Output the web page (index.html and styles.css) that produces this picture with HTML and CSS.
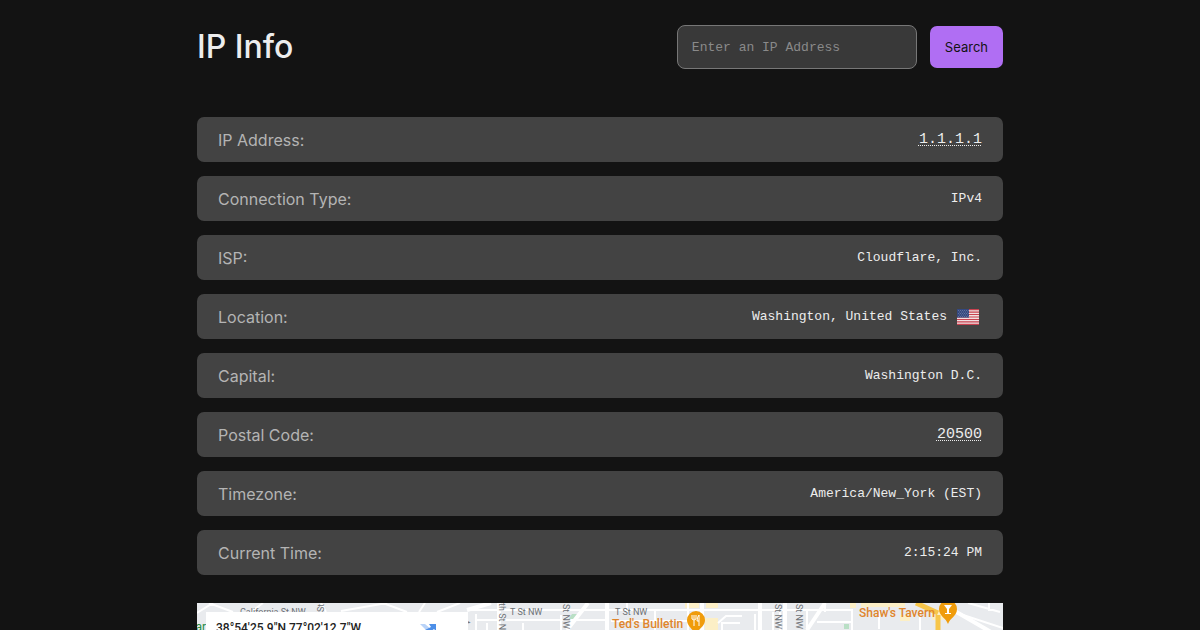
FILE: index.html
```html
<!DOCTYPE html>
<html lang="en">
<head>
<meta charset="utf-8">
<meta name="viewport" content="width=device-width, initial-scale=1">
<title>IP Info</title>
<link rel="stylesheet" href="styles.css">
</head>
<body>
<main class="page">
  <header class="header">
    <h1 class="title">IP Info</h1>
    <form class="search">
      <input class="search-input" type="text" aria-label="IP address" placeholder="Enter an IP Address">
      <button class="search-button" type="submit">Search</button>
    </form>
  </header>
  <dl class="list">
    <div class="row"><dt>IP Address:</dt><dd><a class="dotted" href="#ip">1.1.1.1</a></dd></div>
    <div class="row"><dt>Connection Type:</dt><dd>IPv4</dd></div>
    <div class="row"><dt>ISP:</dt><dd>Cloudflare, Inc.</dd></div>
    <div class="row"><dt>Location:</dt><dd class="with-flag">Washington, United States
      <svg class="flag" viewBox="0 0 22 16" role="img" aria-label="United States flag">
        <rect width="22" height="16" rx="1" fill="#f0dfe1"/>
        <path d="M0 .6h22M0 3.1h22M0 5.5h22M0 8h22M0 10.5h22M0 12.9h22M0 15.4h22" stroke="#c8414f" stroke-width="1.2"/>
        <rect width="12" height="8.6" fill="#34487f"/>
        <path d="M1 1.5h11M2 3h10M1 4.500h11M2 6h10M1 7.500h11" stroke="#a0abc8" stroke-width=".6" stroke-dasharray=".7 1.3"/>
      </svg></dd></div>
    <div class="row"><dt>Capital:</dt><dd>Washington D.C.</dd></div>
    <div class="row"><dt>Postal Code:</dt><dd><a class="dotted" href="#postal">20500</a></dd></div>
    <div class="row"><dt>Timezone:</dt><dd>America/New_York (EST)</dd></div>
    <div class="row"><dt>Current Time:</dt><dd>2:15:24 PM</dd></div>
  </dl>
  <section class="map" aria-label="Map">
    <svg class="map-canvas" viewBox="0 0 806 27" preserveAspectRatio="xMidYMin slice">
      <rect width="806" height="27" fill="#e9ebee"/>
      <g fill="#fcefc6">
        <path d="M488 0h14v5h-14zM509 0h12v5h-12zM508 15h13v12h-13zM653 0h6v5h-6zM664 0h44v4h-44zM703 12h10v6h-10zM735 7h12v10h-12z"/>
      </g>
      <path d="M375 11h6l-5 6h-5zM647 21h5v5h-5z" fill="#b9dfc5"/>
      <g fill="none" stroke="#fff" stroke-width="2">
        <path d="M12 0l24 9M0 10l16-10M54 9L66 0M124 0l5 9M144 8l46-8M186 0l24 9M222 9l6-9M240 9l23-9"/>
        <path d="M271 7h385M280 17h132M290 20v7M279 11v16M326 20v7M364 12v15M414 18h92M430 0v9M458 7v20M491 0v27M521 20l8-7h16M525 27v-7h18M558 11v16M576 9v18M583 9v18M628 0v9M620 19h35v8M610 8v19M655 8v19M682 8v18M723 8v19M760 10l46 15M771 0l32 9M792 0v8"/>
      </g>
      <g fill="none" stroke="#fff" stroke-width="4">
        <path d="M270 7L294 0M410 0v27M505 0v27M302 0v27M370 27L391 0M588 0v27M563 0v27M610 27L628 0M756 7l38 22"/>
      </g>
      <path d="M719 0l22 10M741 12v15" fill="none" stroke="#f7c64b" stroke-width="5"/>
      <g class="street">
        <text x="43" y="12">California St NW</text>
        <text x="313" y="12">T St NW</text>
        <text x="418" y="12">T St NW</text>
        <text transform="translate(302 0) rotate(90)">th St N</text>
        <text transform="translate(366 1) rotate(90)">St NW</text>
        <text transform="translate(578 1) rotate(90)">St NW</text>
        <text transform="translate(599 1) rotate(90)">St NW</text>
        <text transform="translate(127 9) rotate(-90)">St</text>
        <text transform="translate(267 18) rotate(90)">t</text>
      </g>
      <text class="park" x="-9" y="28">Park</text>
      <g class="place">
        <text x="415" y="25">Ted's Bulletin</text>
        <text x="662" y="14">Shaw's Tavern</text>
      </g>
      <path d="M498 31c-2-5-8-8-8-14a9 9 0 0 1 18 0c0 6-6 9-10 14zM751 21c-2-6-9-8-9-15a9 9 0 0 1 18 0c0 7-7 9-9 15z" fill="#f09c0b"/>
      <path d="M495 12v4M497 12v4M499 12v4M495 16q2 2 4 0M497 17v6M502 23V12q-2 2-2 6h2" fill="none" stroke="#fff"/>
      <path d="M747 2h8l-3 4v4h2v1h-6v-1h2V6z" fill="#fff"/>
      <rect x="9" y="9" width="262" height="20" fill="#fff"/>
      <text class="coords" x="19" y="29">38°54'25.9"N 77°02'12.7"W</text>
      <path d="M223 21h5l7 6h-6z" fill="#b9d3f8"/>
      <path d="M228 27l6-3-2-3h7v7l-2-2-4 3z" fill="#4d8fe8"/>
    </svg>
  </section>
</main>
</body>
</html>
```
FILE: styles.css
```css
* {
  box-sizing: border-box;
}

body {
  margin: 0;
  background: #131313;
  color: #ededed;
  font-family: Inter, "Liberation Sans", sans-serif;
}

.page {
  display: flex;
  flex-direction: column;
  max-width: 854px;
  min-height: 100vh;
  margin: 0 auto;
  padding: 25px 24px 0;
}

.header {
  display: flex;
  align-items: center;
  justify-content: space-between;
  margin-bottom: 48px;
}

.title {
  margin: 0;
  font-size: 32px;
  line-height: 44px;
  font-weight: 500;
}

.search {
  display: flex;
  align-items: center;
  gap: 13px;
}

.search-input {
  width: 240px;
  height: 44px;
  padding: 0 14px;
  border: 1px solid #777;
  border-radius: 8px;
  background: #393939;
  color: #ededed;
  font-family: "Liberation Mono", monospace;
  font-size: 13px;
}

.search-input::placeholder {
  color: #8a8a8a;
}

.search-button {
  height: 42px;
  padding: 0 15px;
  border: 0;
  border-radius: 7px;
  background: #b06ef3;
  color: #131313;
  font-family: inherit;
  font-size: 13px;
}

.list {
  display: grid;
  gap: 14px;
  margin: 0 0 28px;
}

.row {
  display: flex;
  align-items: center;
  justify-content: space-between;
  gap: 16px;
  min-height: 45px;
  padding: 8px 21px;
  border-radius: 7px;
  background: #434343;
}

.row dt {
  color: #b4b4b4;
  font-size: 16px;
}

.row dd {
  margin: 0;
  font-family: "Liberation Mono", monospace;
  font-size: 13px;
}

.with-flag {
  display: flex;
  align-items: center;
  gap: 10px;
  padding-right: 3px;
}

.flag {
  width: 22px;
  height: 16px;
}

.row .dotted {
  color: inherit;
  font-size: 15px;
  text-decoration: underline dotted 1px;
  text-underline-offset: 2px;
}

.map {
  display: flex;
  flex: 1;
  min-height: 27px;
}

.map-canvas {
  flex: 1;
  width: 100%;
  height: 27px;
}

.street,
.park,
.place,
.coords {
  font-family: Roboto, sans-serif;
}

.street {
  fill: #6c7075;
  font-size: 9px;
}

.park {
  fill: #268c45;
  font-size: 12px;
}

.place {
  fill: #e0852b;
  font-size: 12px;
  font-weight: 500;
}

.coords {
  fill: #222;
  font-size: 12px;
  font-weight: 500;
}
```
